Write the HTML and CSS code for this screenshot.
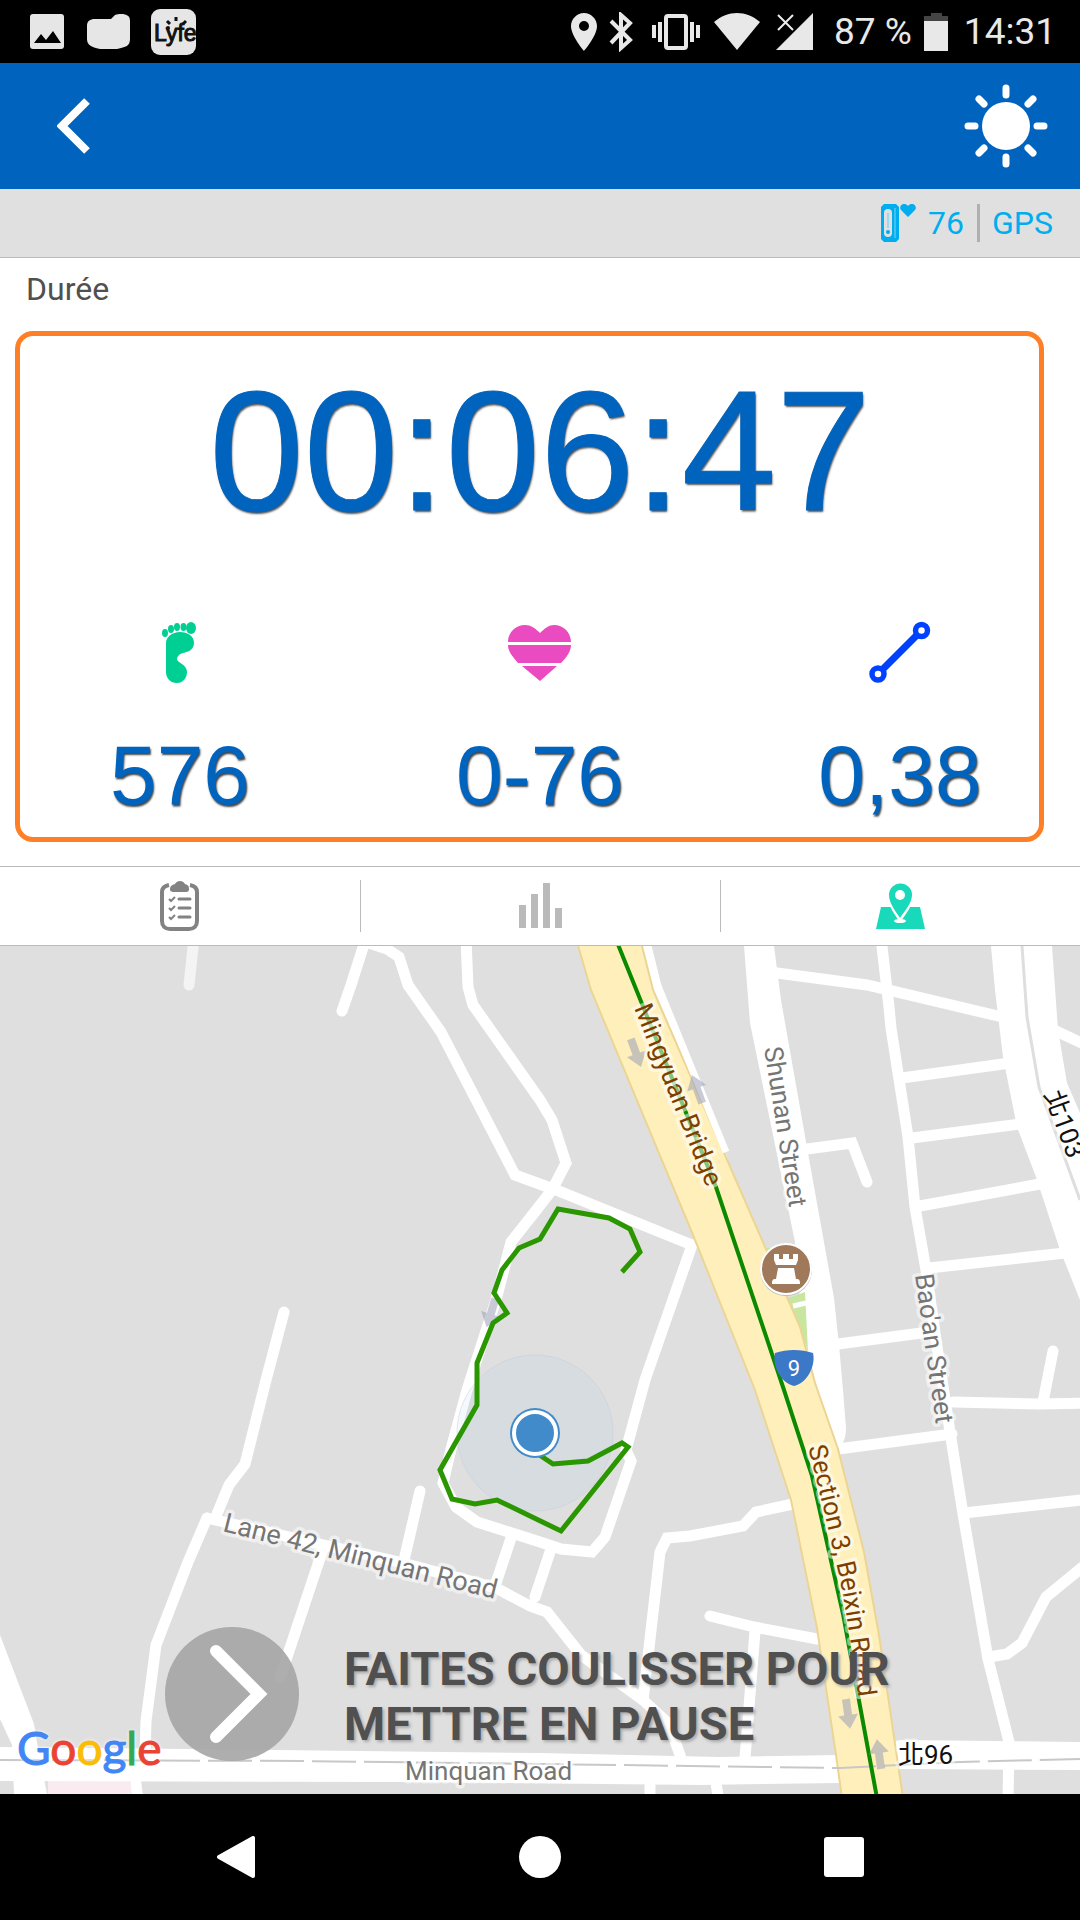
FILE: index.html
```html
<!DOCTYPE html>
<html lang="fr">
  <head>
    <meta charset="UTF-8" />
    <meta name="viewport" content="width=device-width, initial-scale=1.0" />
    <title>Durée</title>
    <link rel="stylesheet" href="styles.css">
  </head>
  <body>
    <div class="status-bar">
      <div class="status-left">
        <svg width="36" height="36" viewBox="0 0 36 36">
          <rect width="34" height="35" rx="3" fill="#e6e6e6" />
          <path d="M4 29l7-9 5 6 7-9 8 12z" fill="#000" />
        </svg>
        <svg width="43" height="36" viewBox="0 0 43 36">
          <path d="M8 5h16l4-4c2-1 4-1 6-1 6 0 9 2 9 7v18c0 7-4 8-13 10H13C4 33 0 31 0 25V12c0-5 3-7 8-7z" fill="#e6e6e6" />
        </svg>
        <svg width="45" height="46" viewBox="0 0 45 46">
          <rect width="45" height="46" rx="9" fill="#e6e6e6" />
          <text class="lyfe-text" x="3" y="32">Lyfe</text>
          <path d="M16 12l3 3M25 8v4M35 12l-3 3" stroke="#111" stroke-width="3" />
          <circle cx="17" cy="19" r="2" fill="#111" />
        </svg>
      </div>
      <div class="status-right">
        <svg width="26" height="38" viewBox="0 0 26 38">
          <path d="M13 0C6 0 0 6 0 13c0 10 13 25 13 25s13-15 13-25C26 6 20 0 13 0zm0 8a5 5 0 1 1 0 10 5 5 0 0 1 0-10z" />
        </svg>
        <svg class="line-icon" width="31" height="40" viewBox="0 0 31 40">
          <path d="M2 9l19 19-9 8V3l9 8L2 31" />
        </svg>
        <svg width="50" height="36" viewBox="0 0 50 36">
          <path d="M0 11h4v13H0zM6 8h4v20H6zM38 8h4v20h-4zM44 11h4v13h-4z" />
          <rect class="vibrate-frame" x="14" y="2" width="20" height="32" rx="2" />
        </svg>
        <svg width="50" height="38" viewBox="0 0 50 38">
          <path d="M0 9C14-3 32-3 46 9L23 37z" />
        </svg>
        <svg width="46" height="38" viewBox="0 0 46 38">
          <path d="M37 0v37H0z" />
          <path d="M2 2l15 15M17 2L2 17" stroke="#ececec" stroke-width="2" />
        </svg>
        <span>87 %</span>
        <svg width="28" height="38" viewBox="0 0 28 38">
          <path d="M7 0h11v3h6v6H0V3h7z" fill="#444" />
          <path d="M0 8h24v30H0z" />
        </svg>
        <span>14:31</span>
      </div>
    </div>

    <header class="header">
      <button class="icon-button" aria-label="Retour">
        <svg width="34" height="56" viewBox="0 0 34 56">
          <path d="M30 3L5 28l25 25" fill="none" stroke="#fff" stroke-width="8" />
        </svg>
      </button>
      <button class="icon-button" aria-label="Luminosité">
        <svg width="84" height="84" viewBox="0 0 84 84">
          <circle cx="42" cy="42" r="24" fill="#fff" />
          <path d="M42 4v7M42 73v7M4 42h7M73 42h7M15 15l5 5M64 64l5 5M15 69l5-5M64 20l5-5" stroke="#fff" stroke-width="7" stroke-linecap="round" />
        </svg>
      </button>
    </header>

    <div class="sensor-bar">
      <svg width="36" height="38" viewBox="0 0 36 38">
        <path d="M3 0h12l3 3v32l-3 3H3l-3-3V3z" fill="#00aeef" />
        <rect x="3" y="5" width="8" height="28" rx="4" fill="#e0e0e0" />
        <path d="M7 9v15" stroke="#9ad8ee" stroke-width="2" />
        <circle cx="7" cy="28" r="2" fill="#00aeef" />
        <path d="M14 4v30" stroke="#7fd2ef" />
        <path d="M27 13l-7-7c-3-4 3-9 7-4 4-5 10 0 7 4z" fill="#00aeef" />
      </svg>
      <span class="sensor-rate">76</span>
      <span class="sensor-gps">GPS</span>
    </div>

    <section class="workout">
      <h1 class="workout-label">Durée</h1>
      <div class="workout-time">00:06:47</div>
      <div class="stats">
        <div class="stat">
          <svg width="62" height="62" viewBox="0 0 62 62" fill="#00cf94">
            <ellipse cx="16" cy="12" rx="3" ry="4" />
            <ellipse cx="22" cy="8" rx="3" ry="4" />
            <ellipse cx="28" cy="6" rx="3" ry="4" />
            <ellipse cx="34.5" cy="6" rx="3" ry="4" />
            <ellipse cx="42" cy="7" rx="5" ry="6" />
            <path d="M17 22c0-6 6-11 14-11s14 4 14 11c0 6-5 9-11 10-4 1-6 4-6 6 0 4 10 5 10 13 0 6-4 11-10 11-7 0-11-5-11-11z" />
          </svg>
          <span class="stat-value">576</span>
        </div>
        <div class="stat">
          <svg width="64" height="62" viewBox="0 0 64 62" fill="#eb4bc0">
            <path d="M0 21C0 11 8 4 17 4c6 0 10 3 15 8 5-5 9-8 14-8 9 0 17 7 17 17zM0 24h63c0 6-4 12-10 18H10C4 35 0 30 0 24zM14 45h35L32 60z" />
          </svg>
          <span class="stat-value">0-76</span>
        </div>
        <div class="stat">
          <svg width="62" height="62" viewBox="0 0 62 62" fill="none" stroke="#0040ff">
            <path d="M13 49L48 14" stroke-width="7" />
            <circle cx="52.5" cy="9.5" r="6" stroke-width="5.5" />
            <circle cx="9" cy="53" r="6" stroke-width="5.5" />
          </svg>
          <span class="stat-value">0,38</span>
        </div>
      </div>
    </section>

    <nav class="tabs">
      <button class="tab" aria-label="Liste">
        <svg width="40" height="50" viewBox="0 0 40 50" fill="none" stroke="#828282">
          <path d="M9 4C4 5 2 7 2 11v29c0 5 3 8 8 8h19c5 0 8-3 8-8V11c0-4-2-6-7-7" stroke-width="4" />
          <path d="M10 8c0-3 2-4 5-5 2-4 8-4 10 0 3 1 4 2 4 5s-2 3-4 3H14c-2 0-4 0-4-3z" fill="#828282" stroke="none" />
          <path d="M19 18h11M19 27h11M19 36h11" stroke-width="3" stroke-linecap="round" />
          <path d="M9 18l2 2 4-4M9 27l2 2 4-4M9 36l2 2 4-4" stroke-width="2" />
        </svg>
      </button>
      <button class="tab" aria-label="Graphique">
        <svg width="43" height="46" viewBox="0 0 43 46" fill="#bababa">
          <path d="M0 22h7v23H0zM12 11h7v34h-7zM24 0h7v45h-7zM36 25h7v20h-7z" />
        </svg>
      </button>
      <button class="tab" aria-label="Carte">
        <svg width="49" height="46" viewBox="0 0 49 46" fill="#18d9b9">
          <path d="M5 24h39l5 22H0z" />
          <path d="M24 36C20 30 13 21 13 12a11 11 0 0 1 23 0c0 9-8 18-12 24z" stroke="#fff" stroke-width="4" />
          <path d="M24 35C20 29 13 20 13 12a11 11 0 0 1 23 0c0 8-8 17-12 23z" />
          <circle cx="24" cy="12" r="5" fill="#fff" />
          <ellipse cx="24" cy="38" rx="6" ry="2" fill="#fff" />
        </svg>
      </button>
    </nav>

    <main class="map">
      <svg class="map-canvas" viewBox="0 0 1080 848" preserveAspectRatio="xMidYMid slice">
        <defs>
          <path id="beixin" d="M808 501C821 550 831 595 838 625S852 705 861 770" />
          <path id="arrow" d="M-4-15h8V1h6L0 15-10 1h6z" />
        </defs>

        <!-- small streets -->
        <g class="street">
          <path class="street-faint" d="M194-8L189 39" />
          <path d="M366-8L351 39 342 65M366-4L387 3 399 11 408 39 441 86 515 229 556 244 692 299" />
          <path d="M466-8L468 41 473 59 540 154 552 174 566 217 552 244 534 267 511 296 496 354 467 444 451 503 443 537 456 561 477 576 540 596 561 603 592 606 605 591 631 515 626 504 645 434 692 299" />
          <path d="M284 366L266 434 245 518 229 539 217 568M207 572L188 616 156 699 146 775 145 809" />
          <path d="M207 572L324 599 399 616 496 642 530 660 547 666 581 709 643 754 669 778 681 812" />
          <path d="M322 606L280 732M420 545L405 610M511 592L496 637M550 606L535 651" />
          <path d="M793 558L756 566 743 580 690 590 667 592 660 606 643 754M710 670L754 681 817 693M755 685L745 812" />
          <path d="M777 27L867 39 998 70M1056 85L1090 101" />
          <path d="M881-8L889 61 891 82 908 191 915 261 926 324 936 394 950 486 963 568 988 713 1009 796 1008 856" />
          <path d="M902 132L1010 117M912 192L1020 178M920 260L1040 238M929 322L1065 307" />
          <path d="M807 203L852 197 867 236M838 398L929 386M838 503L952 488" />
          <path d="M953 456L1039 458 1090 457M1043 456L1053 405M964 567L1090 553M1090 615L1046 651 1022 697 1007 708 989 711" />
          <path d="M650 837V856M716 837L719 856M135 830L138 856" />
        </g>

        <!-- wide roads -->
        <path class="pink-area" d="M48 835h83v13H48z" />
        <g class="road">
          <path d="M0 801L540 807 720 811 840 809 900 794 1080 796V824L900 823 840 837 700 839 400 836 0 835z" />
          <path d="M0 689L34 778 38 802 47 848H14L12 799 0 773z" />
          <path d="M744 0h30l7 54 27 153 26 145 5 47 4 45 3 38c0 12-4 18-10 21l-21-69-12-43-8-95-45-219z" />
          <path d="M991 0h61l6 84 9 53 13 30V354l-20-50-24-73-19-50-14-70-8-67z" />
          <path d="M642 0h9l9 36 69 180-75-172z" />
        </g>
        <path d="M1022 0L1027 71 1039 141 1080 254" fill="none" stroke="#dedede" stroke-width="3" />
        <path class="park" d="M764 302h8l-4 8zM788 352l17-6 3 60-8-25z" />
        <path d="M793 360l13-3" stroke="#fff" stroke-width="5" />
        <path class="highway" d="M577-4L591 44 693 289 755 444 791 554 817 682 836 809 842 852H903L879 689 864 606 838 503 815 437 800 381 728 216 653 44 641-4z" />
        <path class="street-edge" d="M647-4L658 40 726 206" />
        <path class="rail" d="M0 814L300 815 540 818 840 822 960 816 1080 813" />
        <path class="metro" d="M617-4L716 241 784 444 812 530 843 668 877 852" />

        <g class="arrows">
          <use href="#arrow" transform="translate(636 107) rotate(-20)" />
          <use href="#arrow" transform="translate(697 143) rotate(160)" />
          <use href="#arrow" transform="translate(491 367) rotate(17)" />
          <use href="#arrow" transform="translate(848 768) rotate(-8)" />
          <use href="#arrow" transform="translate(879 808) rotate(172)" />
        </g>

        <g class="map-label">
          <text class="label-lane" transform="translate(222 585) rotate(14)">Lane 42, Minquan Road</text>
          <text transform="translate(405 834)">Minquan Road</text>
          <text transform="translate(764 102) rotate(81)">Shunan Street</text>
          <text transform="translate(915 329) rotate(82)">Bao'an Street</text>
          <text class="label-brown" transform="translate(634 62) rotate(68)">Mingyuan Bridge</text>
          <text class="label-brown"><textPath href="#beixin">Section 3, Beixin Road</textPath></text>
          <text class="label-black" transform="translate(898 818)">北96</text>
          <text class="label-black" transform="translate(1044 148) rotate(70)">北103</text>
        </g>

        <g transform="translate(786 323)">
          <circle cy="1" r="26" fill="#bbb" />
          <circle r="25" fill="#a0785a" stroke="#fff" stroke-width="2" />
          <path d="M-12-15h5v5h4v-5h6v5h4v-5h5v6l-2 5h-20l-2-5zM-8-1H8l2 11c4 0 4 2 4 5h-28c0-3 0-5 4-5z" fill="#fff" />
        </g>
        <g transform="translate(794 422)">
          <path d="M-19-15c12-4 26-4 38 0 3 13-6 30-19 33-13-3-22-20-19-33z" fill="#3c78c8" />
          <text class="route-number" y="8">9</text>
        </g>

        <!-- current position and recorded track -->
        <circle class="accuracy" cx="535" cy="487" r="78" />
        <path class="track" d="M622 326L640 306 630 283 609 272 558 263 540 293 519 302 502 324 494 347 507 367 493 377 477 417V459L440 524 452 553 475 558 497 554 561 585 628 501 622 497 588 515 553 518 535 506" />
        <circle cx="535" cy="487" r="25" fill="#428bca" />
        <circle cx="535" cy="487" r="21" fill="#428bca" stroke="#fff" stroke-width="4" />
      </svg>

      <div class="map-logo"><span class="g-blue">G</span><span class="g-red">o</span><span class="g-yellow">o</span><span class="g-blue">g</span><span class="g-green">l</span><span class="g-red">e</span></div>

      <button class="slide-pause">
        <svg class="slide-handle" width="134" height="134" viewBox="0 0 134 134">
          <circle cx="67" cy="67" r="67" fill="#a5a5a5" fill-opacity="0.9" />
          <path d="M51 24l43 43-43 43" fill="none" stroke="#fff" stroke-width="12" stroke-linecap="round" />
        </svg>
        <span class="slide-text">FAITES COULISSER POUR METTRE EN PAUSE</span>
      </button>
    </main>

    <div class="nav-bar">
      <button class="nav-button" aria-label="Précédent">
        <svg width="42" height="42" viewBox="0 0 42 42">
          <path d="M4 21L38 2v38z" fill="#fff" stroke="#fff" stroke-width="4" stroke-linejoin="round" />
        </svg>
      </button>
      <button class="nav-button" aria-label="Accueil">
        <svg width="42" height="42" viewBox="0 0 42 42"><circle cx="21" cy="21" r="21" fill="#fff" /></svg>
      </button>
      <button class="nav-button" aria-label="Applications">
        <svg width="40" height="40" viewBox="0 0 40 40"><rect width="40" height="40" rx="3" fill="#fff" /></svg>
      </button>
    </div>
  </body>
</html>
```
FILE: styles.css
```css
* {
  box-sizing: border-box;
}

body {
  margin: 0;
  min-height: 100vh;
  display: flex;
  flex-direction: column;
  background: #fff;
  font-family: Roboto, sans-serif;
  color: #505050;
}

svg {
  display: block;
}

button {
  border: none;
  padding: 0;
  background: none;
  font-family: inherit;
  cursor: pointer;
}

/* status bar */

.status-bar {
  display: flex;
  justify-content: space-between;
  align-items: center;
  height: 63px;
  padding: 0 24px 0 30px;
  background: #000;
  color: #e8e8e8;
  font-size: 37px;
}

.status-left {
  display: flex;
  align-items: center;
  gap: 21px;
}

.status-right {
  display: flex;
  align-items: center;
  gap: 12px;
  fill: #e8e8e8;
}

.line-icon {
  fill: none;
  stroke: #e8e8e8;
  stroke-width: 4px;
}

.vibrate-frame {
  fill: none;
  stroke: #e8e8e8;
  stroke-width: 4px;
}

.lyfe-text {
  font-family: 'Liberation Sans', sans-serif;
  font-size: 23px;
  fill: #111;
  stroke: #111;
}

/* header */

.header {
  display: flex;
  justify-content: space-between;
  align-items: center;
  height: 126px;
  padding: 0 32px 0 57px;
  background: #0063bd;
}

.sensor-bar {
  display: flex;
  justify-content: flex-end;
  align-items: center;
  height: 69px;
  padding: 0 27px;
  background: #e0e0e0;
  border-bottom: 1px solid #bbb;
  color: #00aeef;
  font-size: 32px;
  line-height: 38px;
}

.sensor-rate {
  margin-left: 11px;
  padding-right: 13px;
  border-right: 3px solid #b0b0b0;
}

.sensor-gps {
  padding-left: 12px;
}

/* workout */

.workout {
  position: relative;
  padding: 12px 0 49px;
}

.workout::after {
  content: '';
  position: absolute;
  inset: 73px 36px 24px 15px;
  border: 5px solid #ff7f27;
  border-radius: 18px;
}

.workout-label {
  margin: 0 26px;
  font-size: 32px;
  font-weight: normal;
  line-height: 38px;
}

.workout-time,
.stat-value {
  font-family: 'Liberation Sans', sans-serif;
  color: #0063bd;
}

.workout-time {
  margin-top: 58px;
  font-size: 170px;
  line-height: 170px;
  text-align: center;
  -webkit-text-stroke: 1px #0063bd;
  text-shadow: 1px 2px 2px #555;
}

.stats {
  display: grid;
  grid-template-columns: repeat(3, 1fr);
  margin-top: 85px;
}

.stat {
  display: flex;
  flex-direction: column;
  align-items: center;
  gap: 50px;
}

.stat-value {
  font-size: 84px;
  line-height: 84px;
  text-shadow: 1px 2px 2px #444;
}

/* tabs */

.tabs {
  display: grid;
  grid-template-columns: repeat(3, 1fr);
  border-top: 1px solid #bbb;
  border-bottom: 1px solid #bbb;
}

.tab {
  display: flex;
  justify-content: center;
  align-items: center;
  height: 52px;
  margin: 13px 0;
}

.tab + .tab {
  border-left: 1px solid #bbb;
}

/* map */

.map {
  position: relative;
  flex: 1;
  min-height: 600px;
  overflow: hidden;
  background: #dfdfdf;
}

.map-canvas {
  position: absolute;
  width: 100%;
  height: 100%;
}

.street path {
  fill: none;
  stroke: #fff;
  stroke-width: 11px;
  stroke-linecap: round;
}

.street .street-faint {
  stroke: #f4f4f4;
}

.street-edge {
  fill: none;
  stroke: #fff;
  stroke-width: 7px;
}

.road {
  fill: #fff;
}

.pink-area {
  fill: #f9ebef;
}

.park {
  fill: #c8e6a0;
}

.highway {
  fill: #fff0bb;
  stroke: #ecd594;
  stroke-width: 2px;
}

.rail {
  fill: none;
  stroke: #c8c8c8;
  stroke-width: 2px;
  stroke-dasharray: 44 8;
}

.metro {
  fill: none;
  stroke: #0b8a00;
  stroke-width: 4px;
}

.arrows {
  fill: #9a9fb8;
  fill-opacity: 0.55;
}

.map-label {
  font-size: 26px;
  fill: #757575;
  stroke: #fff;
  stroke-opacity: 0.5;
  stroke-width: 7px;
  stroke-linejoin: round;
}

.map-label text {
  paint-order: stroke;
}

.label-lane {
  font-size: 27px;
}

.label-brown {
  fill: #7d3f00;
}

.label-black {
  font-family: Roboto, 'Noto Sans CJK TC', sans-serif;
  fill: #111;
}

.route-number {
  font-size: 22px;
  fill: #fff;
  text-anchor: middle;
}

.accuracy {
  fill: #a0d0e8;
  fill-opacity: 0.12;
  stroke: #c8ccdc;
  stroke-opacity: 0.5;
}

.track {
  fill: none;
  stroke: #2a9600;
  stroke-width: 5px;
}

.map-logo {
  position: absolute;
  left: 17px;
  bottom: 18px;
  font-family: Lato, sans-serif;
  font-size: 46px;
  line-height: 56px;
  -webkit-text-stroke: 1px;
  text-shadow: 0 0 4px #fff;
}

.g-blue {
  color: #4285f4;
}

.g-red {
  color: #ea4335;
}

.g-yellow {
  color: #fbbc05;
}

.g-green {
  color: #34a853;
}

.slide-pause {
  position: absolute;
  left: 165px;
  right: 165px;
  bottom: 33px;
  display: flex;
  align-items: center;
  gap: 45px;
  text-align: left;
}

.slide-handle {
  flex: none;
}

.slide-text {
  padding-top: 4px;
  color: #505050;
  font-size: 47px;
  font-weight: bold;
  line-height: 55px;
  text-shadow: 2px 2px 3px #aaa;
}

/* navigation bar */

.nav-bar {
  display: flex;
  height: 126px;
  padding: 0 84px;
  background: #000;
}

.nav-button {
  flex: 1;
  display: flex;
  justify-content: center;
  align-items: center;
}
```
